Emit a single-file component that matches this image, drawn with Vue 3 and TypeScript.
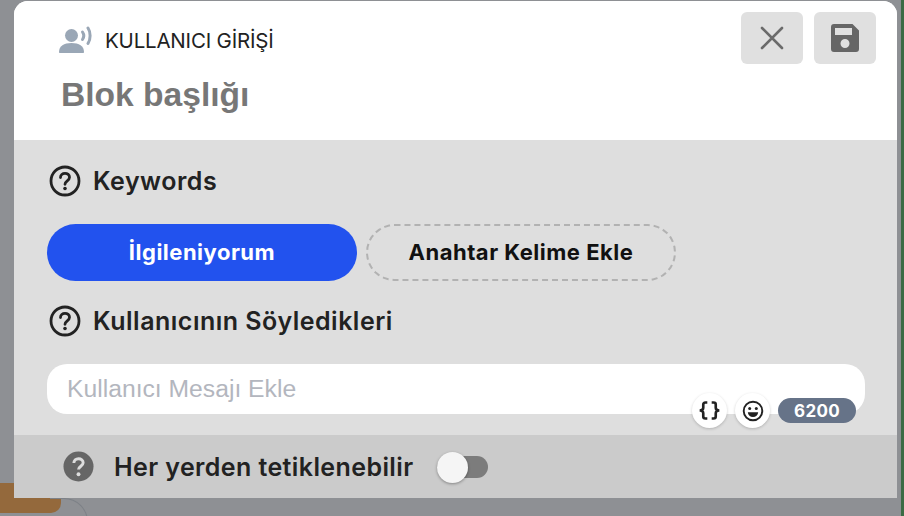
<script setup lang="ts">
const badgeCount: number = 6200
</script>

<template>
  <div class="canvas">
    <div class="node-orange"></div>
    <div class="node-line"></div>
    <div class="edge-green"></div>
    <section class="modal">
      <header class="head">
        <div class="head-left">
          <div class="type">
            <svg class="type-icon" viewBox="0 0 36 28" width="36" height="28">
              <circle cx="13.5" cy="9.5" r="6.5" fill="#9aa7b6" />
              <path d="M1 26c0-6 5-9 12.500-9S26 20 26 26c0 .8-.5 1-1 1H2c-.6 0-1-.3-1-1z" fill="#9aa7b6" />
              <path d="M24.500 6c1.500 2.200 1.500 5.300 0 7.500" fill="none" stroke="#9aa7b6" stroke-width="3" stroke-linecap="round" />
              <path d="M30 2c2.800 4.200 2.800 11 0 15.500" fill="none" stroke="#9aa7b6" stroke-width="3" stroke-linecap="round" />
            </svg>
            <span class="type-label">KULLANICI GİRİŞİ</span>
          </div>
          <h1 class="title">Blok başlığı</h1>
        </div>
        <div class="actions">
          <button class="action" aria-label="Kapat">
            <svg viewBox="0 0 24 24" width="24" height="24">
              <path d="M2 2l20 20M22 2L2 22" stroke="#6b6b6b" stroke-width="2.600" stroke-linecap="round" />
            </svg>
          </button>
          <button class="action" aria-label="Kaydet">
            <svg viewBox="0 0 28 28" width="28" height="28">
              <path fill="#666" fill-rule="evenodd" d="M3 0h18.500L28 6.500V25a3 3 0 0 1-3 3H3a3 3 0 0 1-3-3V3a3 3 0 0 1 3-3zm1 4v7h17V4zm10 11a4.500 4.500 0 1 0 0 9 4.500 4.500 0 0 0 0-9z" />
            </svg>
          </button>
        </div>
      </header>

      <div class="body">
        <div class="section-title">
          <svg class="help" viewBox="0 0 32 32" width="32" height="32">
            <circle cx="16" cy="16" r="14" fill="none" stroke="#222" stroke-width="2.800" />
            <path d="M11.500 12.500c0-2.600 2-4.200 4.500-4.200s4.500 1.600 4.500 4c0 3.500-4.500 3.500-4.500 7" fill="none" stroke="#222" stroke-width="2.800" stroke-linecap="round" />
            <circle cx="16" cy="23.500" r="1.800" fill="#222" />
          </svg>
          <span>Keywords</span>
        </div>
        <div class="keywords">
          <button class="chip chip-main">İlgileniyorum</button>
          <button class="chip chip-add">Anahtar Kelime Ekle</button>
        </div>
        <div class="section-title second">
          <svg class="help" viewBox="0 0 32 32" width="32" height="32">
            <circle cx="16" cy="16" r="14" fill="none" stroke="#222" stroke-width="2.800" />
            <path d="M11.500 12.500c0-2.600 2-4.200 4.500-4.200s4.500 1.600 4.500 4c0 3.500-4.500 3.500-4.500 7" fill="none" stroke="#222" stroke-width="2.800" stroke-linecap="round" />
            <circle cx="16" cy="23.500" r="1.800" fill="#222" />
          </svg>
          <span>Kullanıcının Söyledikleri</span>
        </div>
        <div class="message">
          <span class="placeholder">Kullanıcı Mesajı Ekle</span>
          <div class="tools">
            <span class="tool braces">
              <svg viewBox="0 0 21 17" width="23" height="19">
                <path d="M8.500 1.200H6.800C5.400 1.200 4.800 2 4.800 3v3c0 1.400-1 2.500-3.300 2.500 2.300 0 3.300 1.100 3.300 2.500v3c0 1 .6 1.800 2 1.800h1.700M12.500 1.200h1.700c1.400 0 2 .8 2 1.800v3c0 1.400 1 2.500 3.300 2.500-2.300 0-3.300 1.100-3.300 2.500v3c0 1-.6 1.800-2 1.800h-1.700" fill="none" stroke="#222" stroke-width="2.400" />
              </svg>
            </span>
            <span class="tool">
              <svg viewBox="0 0 22 22" width="22" height="22">
                <circle cx="11" cy="11" r="9.300" fill="none" stroke="#222" stroke-width="1.900" />
                <circle cx="7.700" cy="8.500" r="1.500" fill="#222" />
                <circle cx="14.300" cy="8.500" r="1.500" fill="#222" />
                <path d="M5.800 12.300h10.400c-.3 3-2.400 4.700-5.200 4.700s-4.900-1.700-5.200-4.700z" fill="#222" />
              </svg>
            </span>
            <span class="count">{{ badgeCount }}</span>
          </div>
        </div>
      </div>

      <footer class="foot">
        <svg class="foot-help" viewBox="0 0 32 32" width="31" height="31">
          <circle cx="16" cy="16" r="15.500" fill="#666" />
          <path d="M11.200 12.500c0-2.800 2.100-4.500 4.800-4.500s4.800 1.600 4.800 4.200c0 3.600-4.800 3.500-4.800 7" fill="none" stroke="#ddd" stroke-width="3" />
          <circle cx="16" cy="24" r="2" fill="#ddd" />
        </svg>
        <span class="foot-label">Her yerden tetiklenebilir</span>
        <span class="switch"><span class="knob"></span></span>
      </footer>
    </section>
  </div>
</template>

<style>
html, body { margin: 0; background: #8e9094; }
</style>

<style scoped>
.canvas {
  position: relative;
  width: 904px;
  height: 516px;
  overflow: hidden;
  background: #8e9094;
  font-family: Inter, "Liberation Sans", sans-serif;
}
.node-orange {
  position: absolute;
  left: -20px;
  top: 483px;
  width: 81px;
  height: 30px;
  background: #94693c;
  border-radius: 0 0 10px 10px;
}
.node-line {
  position: absolute;
  left: 50px;
  top: 498px;
  width: 38px;
  height: 40px;
  box-sizing: border-box;
  border-top: 1px solid #7d8187;
  border-right: 1px solid #7d8187;
  border-radius: 0 24px 0 0;
}
.edge-green {
  position: absolute;
  right: 0;
  top: 0;
  width: 3px;
  height: 516px;
  background: #3c6b44;
}
.modal {
  position: absolute;
  left: 14px;
  top: 1px;
  width: 883px;
  height: 497px;
  display: flex;
  flex-direction: column;
  border-radius: 14px 14px 0 0;
  overflow: hidden;
  background: #fff;
}
.head {
  height: 139px;
  flex: none;
  display: flex;
  justify-content: space-between;
  background: #fff;
}
.head-left {
  padding: 25px 0 0 44px;
}
.type {
  display: flex;
  align-items: center;
  gap: 11px;
  height: 28px;
}
.type-label {
  font-size: 20.500px;
  color: #222;
  letter-spacing: -0.2px;
  font-weight: 400;
}
.title {
  margin: 23px 0 0 3px;
  font: 700 33.600px/36px "Liberation Sans", Arial, sans-serif;
  color: #777;
}
.actions {
  display: flex;
  gap: 11px;
  padding: 11px 21px 0 0;
}
.action {
  width: 62px;
  height: 52px;
  padding: 0;
  border: none;
  border-radius: 6px;
  background: #e0e0e0;
  display: flex;
  align-items: center;
  justify-content: center;
}
.body {
  flex: 1;
  background: #dedede;
  padding: 25px 32px 0 33px;
  display: flex;
  flex-direction: column;
}
.section-title {
  display: flex;
  align-items: center;
  gap: 12px;
  font-size: 25px;
  letter-spacing: 0.5px;
  line-height: 32px;
  font-weight: 600;
  color: #222;
  margin-left: 2px;
}
.second {
  margin-top: 24px;
}
.keywords {
  display: flex;
  gap: 9px;
  margin-top: 27px;
}
.chip {
  height: 57px;
  border-radius: 29px;
  font-family: inherit;
  font-size: 22px;
  font-weight: 700;
  letter-spacing: 0.5px;
  padding: 0 0 2px;
}
.chip-main {
  width: 310px;
  border: none;
  background: #2252ee;
  color: #fff;
}
.chip-add {
  width: 310px;
  background: transparent;
  border: 2px dashed #b2b2b2;
  color: #111;
}
.message {
  position: relative;
  margin-top: 27px;
  height: 50px;
  width: 818px;
  background: #fff;
  border-radius: 20px;
  display: flex;
  align-items: center;
  padding-left: 20px;
  box-sizing: border-box;
}
.placeholder {
  font-size: 24.700px;
  color: #b3b6be;
  font-family: "Liberation Sans", Arial, sans-serif;
}
.tools {
  position: absolute;
  right: 9px;
  top: 29px;
  display: flex;
  align-items: center;
  gap: 8px;
}
.tool {
  width: 35px;
  height: 35px;
  border-radius: 50%;
  background: #fff;
  box-shadow: 0 1px 3px rgba(0, 0, 0, 0.2);
  display: flex;
  align-items: center;
  justify-content: center;
}
.count {
  width: 78px;
  height: 25px;
  border-radius: 13px;
  background: #667388;
  color: #fff;
  font-size: 17px;
  font-weight: 700;
  letter-spacing: 0.3px;
  display: flex;
  align-items: center;
  justify-content: center;
}
.foot {
  height: 63px;
  flex: none;
  background: #cbcbcb;
  display: flex;
  align-items: center;
  padding-left: 49px;
}
.foot-label {
  margin-left: 20px;
  font-size: 25px;
  letter-spacing: 0.4px;
  font-weight: 600;
  color: #222;
}
.switch {
  position: relative;
  margin-left: 23px;
  width: 51px;
  height: 22px;
  border-radius: 11px;
  background: #7c7c7c;
}
.knob {
  position: absolute;
  left: 0;
  top: -4px;
  width: 31px;
  height: 31px;
  border-radius: 50%;
  background: #f5f5f5;
  box-shadow: 0 1px 3px rgba(0, 0, 0, 0.35);
}
</style>
